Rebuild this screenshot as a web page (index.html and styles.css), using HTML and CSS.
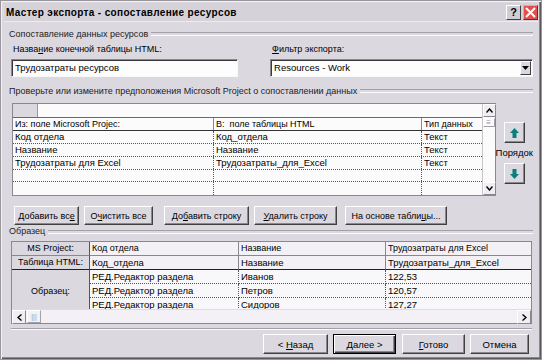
FILE: index.html
```html
<!DOCTYPE html>
<html lang="ru">
<head>
<meta charset="utf-8">
<title>Мастер экспорта - сопоставление ресурсов</title>
<link rel="stylesheet" href="styles.css">
</head>
<body>
<div class="window">
  <div class="titlebar">
    <span class="title">Мастер экспорта - сопоставление ресурсов</span>
    <div class="tb-btns">
      <span class="tb-btn help">?</span>
      <span class="tb-btn close"><svg width="11" height="11" viewBox="0 0 11 11"><path d="M1 1 L10 10 M10 1 L1 10" stroke="#fff" stroke-width="2"/></svg></span>
    </div>
  </div>
  <div class="content">
    <div class="group g1"><span>Сопоставление данных ресурсов</span></div>
    <div class="fields">
      <div class="field left">
        <label>Назва<u>н</u>ие конечной таблицы HTML:</label>
        <div class="input">Трудозатраты ресурсов</div>
      </div>
      <div class="field right">
        <label><u>Ф</u>ильтр экспорта:</label>
        <div class="input select"><span>Resources - Work</span><span class="drop"><svg width="7" height="4" viewBox="0 0 7 4"><path d="M0 0 H7 L3.5 4 Z" fill="#000"/></svg></span></div>
      </div>
    </div>
    <div class="group g2"><span>Проверьте или измените предположения Microsoft Project о сопоставлении данных</span></div>
    <div class="mapping">
      <div class="mgrid">
        <div class="mtable">
          <div class="editbar"><span class="editcell"></span></div>
          <div class="mrow mhead"><span>Из: поле Microsoft Projec:</span><span>В:&nbsp; поле таблицы HTML</span><span>Тип данных</span></div>
          <div class="mrow"><span>Код отдела</span><span>Код_отдела</span><span>Текст</span></div>
          <div class="mrow"><span>Название</span><span>Название</span><span>Текст</span></div>
          <div class="mrow"><span>Трудозатраты для Excel</span><span>Трудозатраты_для_Excel</span><span>Текст</span></div>
          <div class="mrow"><span></span><span></span><span></span></div>
          <div class="mrow"><span></span><span></span><span></span></div>
        </div>
        <div class="vscroll">
          <span class="sbtn"><svg width="7" height="5" viewBox="0 0 7 5"><path d="M0.5 4.5 L3.5 1 L6.5 4.5" fill="none" stroke="#000" stroke-width="1.4"/></svg></span>
          <span class="vthumb">≡</span>
          <span class="vtrack"></span>
          <span class="sbtn"><svg width="7" height="5" viewBox="0 0 7 5"><path d="M0.5 0.5 L3.5 4 L6.5 0.5" fill="none" stroke="#000" stroke-width="1.4"/></svg></span>
        </div>
      </div>
      <div class="order">
        <span class="obtn"><svg width="9" height="10" viewBox="0 0 9 10"><path d="M4.5 0 L9 5 H6.5 V10 H2.5 V5 H0 Z" fill="#0a7f80"/></svg></span>
        <span class="olabel">Порядок</span>
        <span class="obtn"><svg width="9" height="10" viewBox="0 0 9 10"><path d="M4.5 10 L9 5 H6.5 V0 H2.5 V5 H0 Z" fill="#0a7f80"/></svg></span>
      </div>
    </div>
    <div class="actions">
      <button class="btn b1">Добавить вс<u>е</u></button>
      <button class="btn b2">О<u>ч</u>истить все</button>
      <button class="btn b3">До<u>б</u>авить строку</button>
      <button class="btn b4"><u>У</u>далить строку</button>
      <button class="btn b5">На основе табли<u>ц</u>ы...</button>
    </div>
    <div class="group g3"><span>Образец</span></div>
    <div class="sample">
      <div class="sgrid">
        <div class="sh r1">MS Project:</div><div class="sc r1">Код отдела</div><div class="sc r1">Название</div><div class="sc r1 last">Трудозатраты для Excel</div>
        <div class="sh r2">Таблица HTML:</div><div class="sc r2">Код_отдела</div><div class="sc r2">Название</div><div class="sc r2 last">Трудозатраты_для_Excel</div>
        <div class="sh rs">Образец:</div>
        <div class="sc d">РЕД.Редактор раздела</div><div class="sc d">Иванов</div><div class="sc d last">122,53</div>
        <div class="sc d">РЕД.Редактор раздела</div><div class="sc d">Петров</div><div class="sc d last">120,57</div>
        <div class="sc d cut">РЕД.Редактор раздела</div><div class="sc d cut">Сидоров</div><div class="sc d cut last">127,27</div>
      </div>
      <div class="hscroll">
        <span class="sbtn"><svg width="5" height="7" viewBox="0 0 5 7"><path d="M4.5 0.5 L1 3.5 L4.5 6.5" fill="none" stroke="#000" stroke-width="1.4"/></svg></span>
        <span class="hthumb">|||</span>
        <span class="htrack"></span>
        <span class="sbtn"><svg width="5" height="7" viewBox="0 0 5 7"><path d="M0.5 0.5 L4 3.5 L0.5 6.5" fill="none" stroke="#000" stroke-width="1.4"/></svg></span>
      </div>
    </div>
    <div class="sep"></div>
    <div class="footer">
      <button class="btn fb f1">&lt; <u>Н</u>азад</button>
      <button class="btn fb f2 default"><u>Д</u>алее &gt;</button>
      <button class="btn fb f3"><u>Г</u>отово</button>
      <button class="btn fb f4">Отмена</button>
    </div>
  </div>
</div>
</body>
</html>
```

FILE: styles.css
```css
* { box-sizing: border-box; }
html, body { margin: 0; padding: 0; }
body {
  width: 542px; height: 360px; overflow: hidden;
  font-family: "Liberation Sans", Arial, sans-serif;
  font-size: 9px; color: #000;
  background: #dcd8e0;
}
.window {
  width: 542px; height: 360px;
  background: #dcd8e0;
  border: 1px solid #9a979c;
  box-shadow: inset 1px 1px 0 #f2f0f4, inset -1px -1px 0 #5a585c, inset -2px -2px 0 #8c898f;
  padding: 2px 3px 3px 3px;
  display: flex; flex-direction: column;
}
.titlebar {
  height: 19px; flex: none;
  display: flex; align-items: center; justify-content: space-between;
  padding: 0 0 0 2px;
  background: #d6d2da;
  border-bottom: 1px solid #eeecf0;
}
.title { font-size: 10px; font-weight: bold; letter-spacing: 0.35px; }
.tb-btns { display: flex; gap: 2px; }
.tb-btn {
  width: 15px; height: 15px; display: flex; align-items: center; justify-content: center;
}
.help {
  background: #d0ccd4; font-weight: bold; font-size: 11px;
  border: 1px solid; border-color: #fff #404040 #404040 #fff;
}
.close { background: #e2504c; border: 1px solid; border-color: #f6a09c #8a2020 #8a2020 #f6a09c; }
.content { flex: 1; display: flex; flex-direction: column; padding: 0 5px 0 5px; }

.group {
  display: flex; align-items: center; height: 12px; line-height: 12px; flex: none;
  color: #222;
}
.group::after {
  content: ""; flex: 1; height: 2px; margin-left: 3px;
  border-top: 1px solid #a4a0a8; border-bottom: 1px solid #fbfafc;
}
.g1 { margin-top: 6px; }
.fields { display: flex; margin-top: 3px; }
.field { display: flex; flex-direction: column; }
.field label { height: 12px; line-height: 12px; padding-left: 2px; }
.field.left { width: 228px; margin-left: 2px; }
.field.right { width: 264px; margin-left: 32px; }
.input {
  margin-top: 4px; height: 18px; background: #fdfdfd;
  border: 1px solid; border-color: #8a878d #f8f8f8 #f8f8f8 #8a878d;
  box-shadow: inset 1px 1px 0 #3a383c;
  padding: 0 3px; line-height: 16px; font-size: 9.5px;
  display: flex; align-items: center;
}
.select { justify-content: space-between; padding-right: 1px; }
.drop {
  width: 11px; height: 14px; display: flex; align-items: center; justify-content: center;
  background: #dcd8e0; border: 1px solid; border-color: #fff #404040 #404040 #fff;
}
.g2 { margin-top: 8px; }

.mapping { display: flex; margin-top: 6px; height: 93px; flex: none; }
.mgrid {
  width: 486px; margin-left: 3px; display: flex;
  border: 1px solid #8a878d; background: #fbfbfc;
}
.mtable { flex: 1; display: flex; flex-direction: column; }
.editbar { height: 14px; border-bottom: 1px solid #6a686c; display: flex; }
.editcell { width: 25px; background: #dcd8e0; border-right: 1px solid #9a979c; }
.mrow {
  height: 13px; display: grid; grid-template-columns: 201px 208px 1fr;
  border-bottom: 1px dotted #555;
  font-size: 9.5px; line-height: 12px;
}
.mrow span { padding-left: 2px; border-right: 1px dotted #555; white-space: nowrap; overflow: hidden; }
.mrow span:last-child { border-right: none; }
.mhead { border-bottom: 1px solid #333; font-size: 9px; }
.mhead span { border-right: 1px solid #8a878d; }
.mrow:last-child { border-bottom: none; }
.vscroll { width: 13px; display: flex; flex-direction: column; border-left: 1px solid #c8c5cb; }
.sbtn {
  flex: none; width: 13px; height: 13px; display: flex; align-items: center; justify-content: center;
  background: #f0eef2; border: 1px solid; border-color: #fff #8a878d #8a878d #fff;
}
.vthumb {
  flex: none; height: 9px; margin-top: 1px; font-size: 8px; line-height: 8px; text-align: center; color: #9a979c;
  border: 1px solid; border-color: #fff #a4a0a8 #a4a0a8 #fff;
}
.vtrack { flex: 1; }
.order {
  flex: 1; display: flex; flex-direction: column; align-items: center; padding-top: 19px;
}
.obtn {
  width: 21px; height: 21px; display: flex; align-items: center; justify-content: center;
  background: #dcd8e0; border: 1px solid; border-color: #fff #404040 #404040 #fff;
  box-shadow: inset -1px -1px 0 #8a878d;
}
.olabel { height: 20px; line-height: 20px; font-size: 9.5px; }

.actions { display: flex; margin-top: 10px; margin-left: 5px; gap: 5px; }
.btn {
  font-family: inherit; font-size: 9px; color: #000;
  height: 19px; padding: 0; margin: 0;
  background: #dcd8e0;
  border: 1px solid; border-color: #fff #404040 #404040 #fff;
  box-shadow: inset -1px -1px 0 #8a878d;
}
.b1 { width: 65px; }
.b2 { width: 69px; }
.b3 { width: 85px; margin-left: 6px; }
.b4 { width: 83px; }
.b5 { width: 102px; margin-left: 3px; }

.g3 { margin-top: 1px; height: 11px; line-height: 11px; }
.sample {
  margin-top: 4px; margin-left: 2px; width: 521px; height: 83px; flex: none;
  border: 1px solid #8a878d; display: flex; flex-direction: column; background: #f3f1f5;
}
.sgrid {
  flex: 1; display: grid; overflow: hidden;
  grid-template-columns: 78px 149px 147px 1fr;
  grid-template-rows: 14px 14px 14px 14px 14px;
}
.sh {
  background: #dcd8e0; text-align: center; line-height: 13px;
  border-right: 1px solid #555; border-bottom: 1px solid #8a878d;
}
.sh.r2 { border-bottom: 1px solid #222; }
.rs { grid-row: 3 / span 3; display: flex; align-items: center; justify-content: center; border-bottom: none; }
.sc {
  padding-left: 2px; line-height: 13px; white-space: nowrap; overflow: hidden;
  border-right: 1px solid #8a878d; border-bottom: 1px solid #8a878d; font-size: 9.5px;
}
.sc.r1 { font-size: 9px; }
.sc.r2 { border-bottom: 1px solid #222; }
.sc.d { border-right: 1px dotted #555; border-bottom: 1px dotted #555; background: #f8f7f9; }
.sc.last { border-right: none; }
.sc.cut { border-bottom: none; }
.hscroll { height: 14px; flex: none; display: flex; background: #f3f1f5; border-top: 1px solid #dedbe2; }
.hscroll .sbtn { height: 14px; width: 14px; }
.hthumb {
  width: 14px; margin-left: 1px; font-size: 7px; line-height: 12px; text-align: center; color: #9a979c;
  border: 1px solid; border-color: #fff #a4a0a8 #a4a0a8 #fff;
}
.htrack { flex: 1; }

.sep {
  margin-top: 4px; height: 2px; flex: none; margin-left: 2px; width: 521px;
  border-top: 1px solid #a4a0a8; border-bottom: 1px solid #fbfafc;
}
.footer { display: flex; justify-content: flex-end; margin-top: 4px; padding-right: 4px; }
.fb { height: 20px; font-size: 9.5px; }
.f1 { width: 65px; }
.f2 { width: 63px; margin-left: 5px; }
.f3 { width: 63px; margin-left: 6px; }
.f4 { width: 59px; margin-left: 5px; }
.fb.default { border: 1px solid #000; box-shadow: inset 1px 1px 0 #fff, inset -1px -1px 0 #404040, inset -2px -2px 0 #8a878d; }
```
